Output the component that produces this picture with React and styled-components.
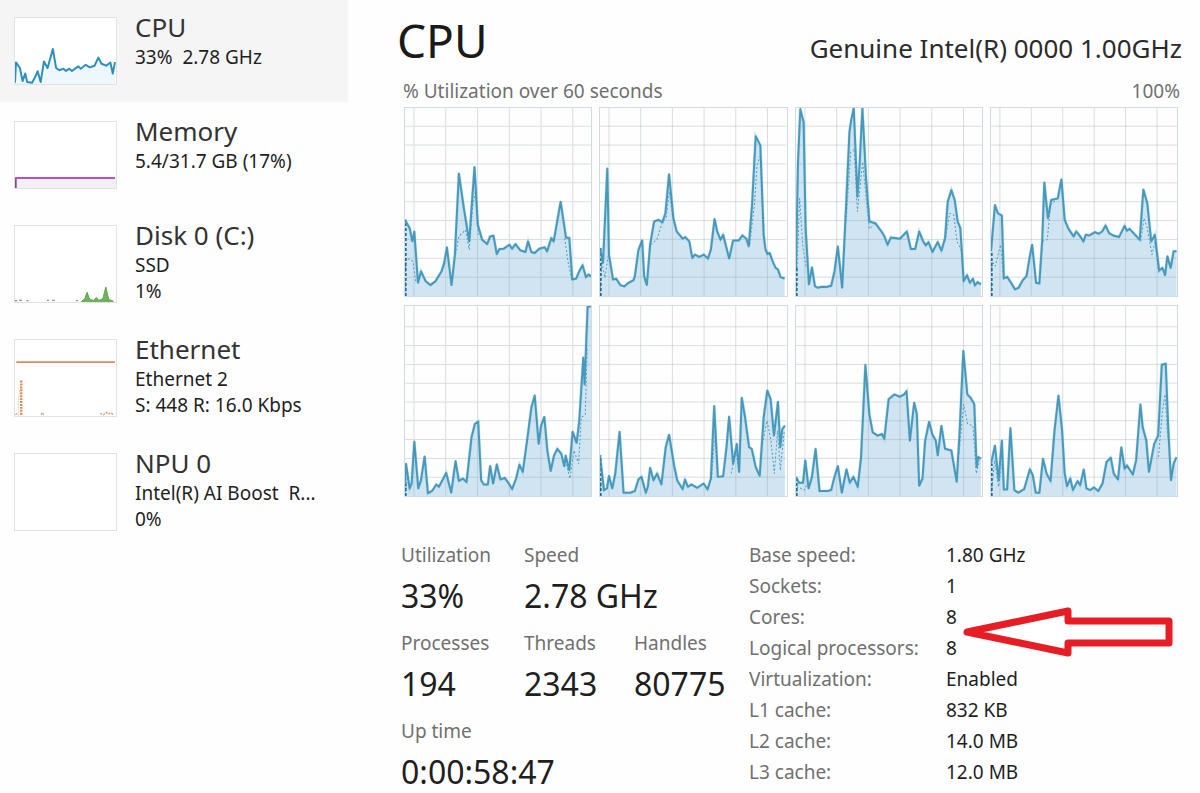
import styled, { createGlobalStyle } from 'styled-components';

const GlobalStyle = createGlobalStyle`
  * { box-sizing: border-box; }
  body {
    margin: 0;
    background: #fefefe;
    color: #1f1f1f;
    font-family: "Noto Sans", "Open Sans", sans-serif;
    font-size: 19px;
  }
`;

const Page = styled.div`
  display: grid;
  grid-template-columns: 348px minmax(0, 1fr);
`;

const Sidebar = styled.nav`
  display: flex;
  flex-direction: column;
  gap: 2px;
`;

const Item = styled.button`
  display: flex;
  align-items: flex-start;
  gap: 18px;
  padding: 12px 14px 16px;
  border: 0;
  background: ${p => (p.$active ? '#f5f5f5' : 'transparent')};
  color: inherit;
  font: inherit;
  text-align: left;
`;

const Thumb = styled.svg`
  flex: none;
  display: block;
  width: 103px;
  height: ${p => (p.$tall ? '78px' : '68px')};
  margin: 5px 0 1px;
  background: #fff;
  border: 1px solid #e2e2e4;
`;

const ItemText = styled.span`
  display: flex;
  flex-direction: column;
  line-height: 26px;
  white-space: pre;
`;

const ItemTitle = styled.span`
  margin-bottom: 2px;
  font-size: 26px;
  line-height: 30px;
  color: #333;
`;

const Main = styled.main`
  min-width: 0;
`;

const Header = styled.header`
  display: flex;
  justify-content: space-between;
  align-items: baseline;
  padding: 9px 18px 0 49px;
`;

const Title = styled.h1`
  margin: 0;
  font-size: 46px;
  line-height: 62px;
  font-weight: 400;
  color: #1a1a1a;
`;

const Model = styled.span`
  font-size: 26px;
  color: #2b2b2b;
`;

const Caption = styled.div`
  display: flex;
  justify-content: space-between;
  padding: 7px 20px 0 55px;
  line-height: 26px;
  color: #707070;
`;

const Charts = styled.section`
  display: grid;
  grid-template-columns: repeat(4, minmax(0, 1fr));
  gap: 8px 7px;
  padding: 3px 22px 0 56px;
`;

const ChartSvg = styled.svg`
  display: block;
  width: 100%;
  height: ${p => p.$height}px;
  border: 1px solid #d3dbe0;

  path, polyline, polygon { vector-effect: non-scaling-stroke; }
`;

const Footer = styled.section`
  display: grid;
  grid-template-columns: 348px minmax(0, 1fr);
  padding: 43px 20px 0 53px;
`;

const Stats = styled.dl`
  display: grid;
  grid-template-columns: 123px 110px 1fr;
  align-content: start;
  gap: 14px 0;
  margin: 0;
  padding-top: 2px;
`;

const Stat = styled.div`
  grid-column: span ${p => p.$span || 1};
  white-space: nowrap;

  dt {
    line-height: 26px;
    color: #707070;
  }
  dd {
    margin: 8px 0 0;
    font-size: 32px;
    line-height: 40px;
  }
`;

const Details = styled.div`
  position: relative;
`;

const DetailList = styled.dl`
  display: grid;
  grid-template-columns: 197px 1fr;
  margin: 0;
  line-height: 31px;
  white-space: nowrap;

  dt { color: #707070; }
  dd { margin: 0; }
`;

const Arrow = styled.svg`
  position: absolute;
  left: 214px;
  top: 66px;
  width: 212px;
  height: 52px;
`;

// box is the viewBox, user is the total line, kernel the dotted one
const cores = [
  {
    box: [28, 37, 560, 568],
    user: '28,375 42,400 50,440 56,410 67,565 76,530 90,560 104,572 120,560 138,530 146,505 154,458 168,572 178,480 190,235 205,340 221,440 237,215 247,390 260,435 275,448 284,425 294,423 304,478 312,463 325,462 342,450 350,462 360,448 375,467 390,472 398,440 408,472 418,475 432,462 448,458 455,470 468,430 475,440 496,320 512,428 522,430 531,555 543,552 552,530 562,512 572,548 580,540 588,547',
    kernel: 'M28,605 L31,490 L52,500 L60,560 M180,480 L190,425 L210,405 L221,465 L232,330 L240,290 L248,420 M508,430 L518,500 L530,560',
  },
  {
    box: [19, 37, 561, 568],
    user: '19,460 28,505 41,220 46,480 58,555 68,553 80,572 92,576 105,565 120,557 124,545 135,465 146,437 152,545 160,572 170,450 182,380 195,375 207,382 216,355 227,237 240,370 250,410 268,432 276,427 288,440 297,490 305,480 318,487 332,480 344,492 353,465 364,372 372,410 382,435 390,420 408,492 420,437 437,437 448,422 460,432 467,455 477,330 488,122 502,150 512,420 517,462 523,478 530,475 541,505 548,520 555,525 563,548 575,552',
    kernel: 'M19,605 L24,500 L34,550 L44,480 M172,450 L190,435 L206,385 L218,370 L228,290 L238,370 M470,450 L485,320 L492,210 L502,180 L512,430',
  },
  {
    box: [19, 37, 561, 568],
    user: '19,520 25,200 32,40 42,80 48,400 58,570 67,518 76,575 84,580 98,577 110,578 125,574 135,530 145,455 158,580 170,330 180,110 185,75 193,37 204,305 211,200 219,37 230,250 240,380 258,385 275,408 284,422 295,450 305,428 332,432 353,410 365,463 378,463 390,410 402,440 410,452 418,442 430,472 446,442 457,468 468,430 476,320 487,285 497,315 506,380 514,400 524,560 534,542 543,565 552,553 558,573 566,563 576,570',
    kernel: 'M19,605 L30,310 L40,460 L50,520 M170,380 L184,170 L194,160 L204,350 L220,200 L232,330 L240,402 L256,388 M468,440 L482,355 L494,360 L504,440 L518,470',
  },
  {
    box: [19, 37, 566, 568],
    user: '19,470 31,330 40,355 52,362 58,552 68,547 80,565 92,585 103,580 115,558 127,545 136,490 144,450 156,565 166,567 175,430 181,262 192,370 202,315 222,310 233,252 243,375 255,403 270,425 278,410 290,425 300,440 307,420 318,422 335,412 346,417 357,410 367,392 378,415 390,422 408,427 425,393 432,408 440,402 455,418 471,435 482,283 494,325 506,440 517,420 530,528 540,520 548,542 555,485 565,520 574,470 583,470',
    kernel: 'M19,605 L22,500 L32,515 L48,450 L56,540 M175,440 L190,435 L200,330 L214,318 M474,440 L484,370 L494,400 L508,480 L518,440 L528,535',
  },
  {
    box: [28, 22, 560, 576],
    user: '28,560 31,500 42,575 48,560 56,433 68,575 76,550 87,478 97,590 110,582 122,563 130,570 152,528 167,588 180,492 190,552 202,545 213,556 228,420 238,380 248,372 257,550 265,563 277,563 284,507 293,560 304,502 315,548 328,543 340,560 350,577 362,545 372,503 382,525 395,430 408,330 418,293 430,440 437,385 447,358 456,460 466,522 476,475 486,455 498,470 507,508 511,475 522,520 532,403 544,437 552,370 564,178 568,260 577,25 588,22',
    kernel: 'M28,598 L34,540 L42,580 M510,490 L524,545 L536,460 L550,500 L558,360 L570,350 L576,150',
  },
  {
    box: [19, 22, 561, 576],
    user: '19,475 31,580 40,575 46,537 56,575 65,530 78,403 90,588 110,588 124,583 135,547 144,540 157,588 163,570 170,512 180,550 191,530 204,563 217,450 227,412 243,510 252,552 268,577 275,548 284,570 294,563 312,573 331,560 343,578 353,545 363,325 374,540 390,538 400,450 408,357 420,500 431,440 438,525 446,300 456,360 468,450 476,455 488,510 500,537 512,360 523,278 533,305 543,415 555,312 562,450 568,395 576,385',
    kernel: 'M19,598 L22,510 L30,585 M355,545 L366,400 L372,520 M414,530 L428,465 L440,530 M508,440 L522,370 L534,430 L544,530 L554,400 L562,520 L574,400',
  },
  {
    box: [19, 22, 561, 576],
    user: '19,540 28,558 40,558 47,490 57,575 67,540 78,455 90,583 115,583 125,580 135,540 145,507 157,588 171,517 181,558 192,540 205,570 215,480 228,200 240,350 250,405 265,415 278,410 285,425 298,305 315,290 332,297 345,290 352,280 362,430 375,315 383,350 390,567 400,545 408,430 420,373 430,412 440,430 446,475 457,385 468,455 487,460 503,555 512,400 523,158 535,290 545,300 556,320 563,510 568,480 576,485',
    kernel: 'M19,598 L24,570 L44,580 L54,560 M510,470 L524,320 L536,380 L552,385 L562,530 L572,490',
  },
  {
    box: [19, 22, 566, 576],
    user: '19,500 31,445 42,550 52,430 58,578 68,578 78,392 90,580 102,588 120,577 137,517 146,535 155,588 166,588 177,485 188,530 200,553 212,400 224,293 235,400 243,530 250,568 260,545 268,580 282,553 290,565 301,517 309,575 320,580 332,572 345,583 358,560 370,495 383,482 392,530 405,548 415,450 425,515 432,505 450,533 460,490 473,320 480,390 491,430 499,525 515,440 527,415 538,200 550,197 558,400 566,550 574,500 583,480',
    kernel: 'M19,598 L30,490 L42,570 L52,500 M528,480 L540,340 L548,290 L556,420',
  },
];

const details = [
  ['Base speed:', '1.80 GHz'],
  ['Sockets:', '1'],
  ['Cores:', '8'],
  ['Logical processors:', '8'],
  ['Virtualization:', 'Enabled'],
  ['L1 cache:', '832 KB'],
  ['L2 cache:', '14.0 MB'],
  ['L3 cache:', '12.0 MB'],
];

const CoreChart = ({ box, user, kernel }) => {
  const [x, y, w, h] = box;
  const bottom = y + h;
  const pts = user.split(' ');
  const firstY = pts[0].split(',')[1];
  const lastX = pts[pts.length - 1].split(',')[0];
  let grid = '';
  for (let i = 0; i < 6; i++) grid += `M${x + 27 + i * 95.5},${y}V${bottom}`;
  for (let i = 1; i < 10; i++) grid += `M${x},${bottom - i * 57}H${x + w}`;

  return (
    <ChartSvg viewBox={box.join(' ')} preserveAspectRatio="none" $height={y === 37 ? 190 : 192}>
      <polygon points={`${x},${bottom} ${user} ${lastX},${bottom}`} fill="#d0e5f1" />
      <path d={grid} fill="none" stroke="#8c9aa4" strokeOpacity="0.32" />
      <path d={kernel} fill="none" stroke="#4a9cc4" strokeDasharray="2 2" />
      <path d={`M${x + 2},${bottom}V${firstY}`} stroke="#1f6f94" strokeWidth="2" strokeDasharray="3 2" />
      <polyline points={user} fill="none" stroke="#8fd3ee" strokeOpacity="0.5" strokeWidth="3" />
      <polyline points={user} fill="none" stroke="#2d86ad" strokeWidth="2" strokeOpacity="0.8" strokeLinejoin="round" />
    </ChartSvg>
  );
};

const CpuThumb = () => {
  const line = '43,250 46,188 58,205 66,245 74,222 80,248 95,250 103,235 112,215 121,248 131,185 142,205 158,147 168,205 178,212 190,207 198,214 208,207 216,214 235,200 243,207 258,195 270,203 285,198 296,173 306,192 320,198 333,188 340,222 347,187';
  return (
    <Thumb viewBox="43 52 307 202" preserveAspectRatio="none">
      <polygon points={`43,254 ${line} 347,254`} fill="#eef7fb" />
      <polyline points={line} fill="none" stroke="#2c8fbd" strokeWidth="6" strokeLinejoin="round" />
    </Thumb>
  );
};

const MemoryThumb = () => (
  <Thumb viewBox="43 363 307 204" preserveAspectRatio="none">
    <rect x="43" y="536" width="307" height="31" fill="#f2f0f3" />
    <path d="M45,567V536H347" fill="none" stroke="#b552bd" strokeWidth="6" />
    <path d="M45,567V539" stroke="#6f5a75" strokeWidth="4" />
  </Thumb>
);

const DiskThumb = () => (
  <Thumb $tall viewBox="43 674 307 234" preserveAspectRatio="none">
    <path d="M245,906L255,898L262,878L270,900L282,903L290,894L298,903L310,898L319,862L328,900L342,906Z" fill="#6fb35a" stroke="#5fa548" strokeWidth="3" />
    <path d="M43,904H50M56,903H64M78,904H84M140,903H146M156,903H164M228,904H234" stroke="#7d9a74" strokeWidth="4" />
  </Thumb>
);

const EthernetThumb = () => (
  <Thumb $tall viewBox="43 86 307 234" preserveAspectRatio="none">
    <path d="M47,154H347" stroke="#dc8a63" strokeWidth="5" />
    <path d="M62,211V318" stroke="#de8452" strokeWidth="7" strokeDasharray="6 3" />
    <path d="M53,318V280L57,240" fill="none" stroke="#e9b296" strokeWidth="3" strokeDasharray="4 4" />
    <path d="M44,316L52,311M122,316L126,310L130,316M302,312L312,316L320,309L328,314L334,310L342,316" fill="none" stroke="#d39a80" strokeWidth="4" strokeDasharray="7 3" />
  </Thumb>
);

const NpuThumb = () => <Thumb $tall viewBox="0 0 103 78" />;

const devices = [
  { title: 'CPU', lines: ['33%  2.78 GHz'], Graph: CpuThumb, active: true },
  { title: 'Memory', lines: ['5.4/31.7 GB (17%)'], Graph: MemoryThumb },
  { title: 'Disk 0 (C:)', lines: ['SSD', '1%'], Graph: DiskThumb },
  { title: 'Ethernet', lines: ['Ethernet 2', 'S: 448 R: 16.0 Kbps'], Graph: EthernetThumb },
  { title: 'NPU 0', lines: ['Intel(R) AI Boost  R...', '0%'], Graph: NpuThumb },
];

const App = () => {
  return (
    <Page>
      <GlobalStyle />
      <Sidebar>
        {devices.map(({ title, lines, Graph, active }) => (
          <Item key={title} type="button" $active={active}>
            <Graph />
            <ItemText>
              <ItemTitle>{title}</ItemTitle>
              {lines.map(line => <span key={line}>{line}</span>)}
            </ItemText>
          </Item>
        ))}
      </Sidebar>
      <Main>
        <Header>
          <Title>CPU</Title>
          <Model>Genuine Intel(R) 0000 1.00GHz</Model>
        </Header>
        <Caption>
          <span>% Utilization over 60 seconds</span>
          <span>100%</span>
        </Caption>
        <Charts>
          {cores.map((core, i) => <CoreChart key={i} {...core} />)}
        </Charts>
        <Footer>
          <Stats>
            <Stat><dt>Utilization</dt><dd>33%</dd></Stat>
            <Stat $span={2}><dt>Speed</dt><dd>2.78 GHz</dd></Stat>
            <Stat><dt>Processes</dt><dd>194</dd></Stat>
            <Stat><dt>Threads</dt><dd>2343</dd></Stat>
            <Stat><dt>Handles</dt><dd>80775</dd></Stat>
            <Stat $span={3}><dt>Up time</dt><dd>0:00:58:47</dd></Stat>
          </Stats>
          <Details>
            <DetailList>
              {details.map(([label, value]) => [
                <dt key={label}>{label}</dt>,
                <dd key={label + 'v'}>{value}</dd>,
              ])}
            </DetailList>
            <Arrow viewBox="0 0 212 52">
              <path d="M4,26L105,5V15H206V37H105V47Z" fill="#fff" stroke="#e81c24" strokeWidth="7" strokeLinejoin="round" />
            </Arrow>
          </Details>
        </Footer>
      </Main>
    </Page>
  );
};

export default App;
